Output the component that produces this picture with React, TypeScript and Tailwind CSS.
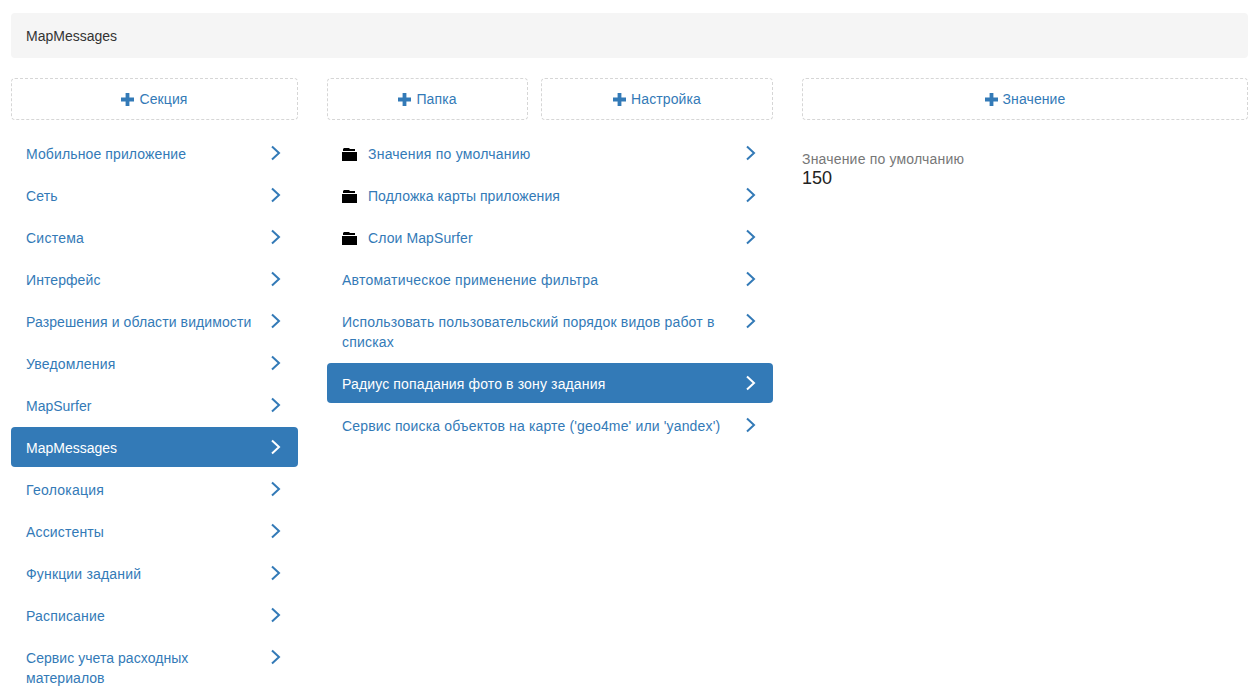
type Row = { t: string; active?: boolean; folder?: boolean; track: string };

const sections: Row[] = [
  { t: "Мобильное приложение", track: "tracking-[0.12px]" },
  { t: "Сеть", track: "tracking-[0.17px]" },
  { t: "Система", track: "tracking-[0.25px]" },
  { t: "Интерфейс", track: "tracking-[0.08px]" },
  { t: "Разрешения и области видимости", track: "tracking-[0.1px]" },
  { t: "Уведомления", track: "tracking-[0.17px]" },
  { t: "MapSurfer", track: "tracking-normal" },
  { t: "MapMessages", active: true, track: "tracking-normal" },
  { t: "Геолокация", track: "tracking-[0.25px]" },
  { t: "Ассистенты", track: "tracking-[0.17px]" },
  { t: "Функции заданий", track: "tracking-[0.17px]" },
  { t: "Расписание", track: "tracking-[0.17px]" },
  { t: "Сервис учета расходных материалов", track: "tracking-[0.05px]" },
];

const settings: Row[] = [
  { t: "Значения по умолчанию", folder: true, track: "tracking-[0.22px]" },
  { t: "Подложка карты приложения", folder: true, track: "tracking-[0.05px]" },
  { t: "Слои MapSurfer", folder: true, track: "tracking-[0.1px]" },
  { t: "Автоматическое применение фильтра", track: "tracking-[0.23px]" },
  { t: "Использовать пользовательский порядок видов работ в списках", track: "tracking-[0.19px]" },
  { t: "Радиус попадания фото в зону задания", active: true, track: "tracking-[0.14px]" },
  { t: "Сервис поиска объектов на карте ('geo4me' или 'yandex')", track: "tracking-[0.15px]" },
];

function Chevron() {
  return (
    <svg width="12" height="16" viewBox="0 0 12 16" fill="none" className="shrink-0">
      <path d="M2 1.5 L9 8 L2 14.5" stroke="currentColor" strokeWidth="2" />
    </svg>
  );
}

function Plus() {
  return (
    <svg width="13" height="13" viewBox="0 0 13 13" className="shrink-0">
      <path d="M4.6 0h3.8v4.6H13v3.8H8.4V13H4.6V8.4H0V4.6h4.6z" fill="currentColor" />
    </svg>
  );
}

function Folder() {
  return (
    <svg width="15" height="13" viewBox="0 0 15 13" className="shrink-0 mr-[11px]">
      <path d="M2 0h5l1 1h5v2H1V1zM0 4h15v9H0z" fill="#000" />
    </svg>
  );
}

function AddButton({ label, className }: { label: string; className: string }) {
  return (
    <div
      className={`h-[42px] flex items-center justify-center gap-[5px] border border-dashed border-[#d6d6d6] rounded tracking-[0.1px] text-[#337ab7] ${className}`}
    >
      <Plus />
      <span>{label}</span>
    </div>
  );
}

function Item({ t, active, folder, track }: Row) {
  return (
    <div
      className={`flex items-start justify-between mb-[2px] rounded px-[15px] pt-[11px] pb-[9px] leading-5 ${
        active ? "bg-[#337ab7] text-white" : "text-[#337ab7]"
      } ${track}`}
    >
      <div className="flex items-center min-w-0">
        {folder && <Folder />}
        <span>{t}</span>
      </div>
      <div className="ml-[12px] mr-[1px] pt-[1px]">
        <Chevron />
      </div>
    </div>
  );
}

export default function App() {
  return (
    <div
      className="px-[11px] pt-[13px] h-[699px] overflow-hidden bg-white text-[14px] leading-5 text-[#333333]"
      style={{ fontFamily: '"Liberation Sans", Arial, sans-serif' }}
    >
      <div className="h-[45px] w-[1237px] flex items-center px-[15px] bg-[#f5f5f5] rounded mb-[20px]">
        MapMessages
      </div>
      <div className="flex gap-[29px]">
        <div className="w-[287px] shrink-0">
          <AddButton label="Секция" className="mb-[13px]" />
          {sections.map((s) => (
            <Item key={s.t} {...s} />
          ))}
        </div>
        <div className="w-[446px] shrink-0">
          <div className="flex gap-[13px] mb-[13px]">
            <AddButton label="Папка" className="w-[201px]" />
            <AddButton label="Настройка" className="w-[232px]" />
          </div>
          {settings.map((s) => (
            <Item key={s.t} {...s} />
          ))}
        </div>
        <div className="w-[446px] shrink-0">
          <AddButton label="Значение" className="mb-[29px]" />
          <div className="text-[#777777] tracking-[0.19px]">Значение по умолчанию</div>
          <div className="text-[18px] leading-[18px] text-[#222222]">150</div>
        </div>
      </div>
    </div>
  );
}
